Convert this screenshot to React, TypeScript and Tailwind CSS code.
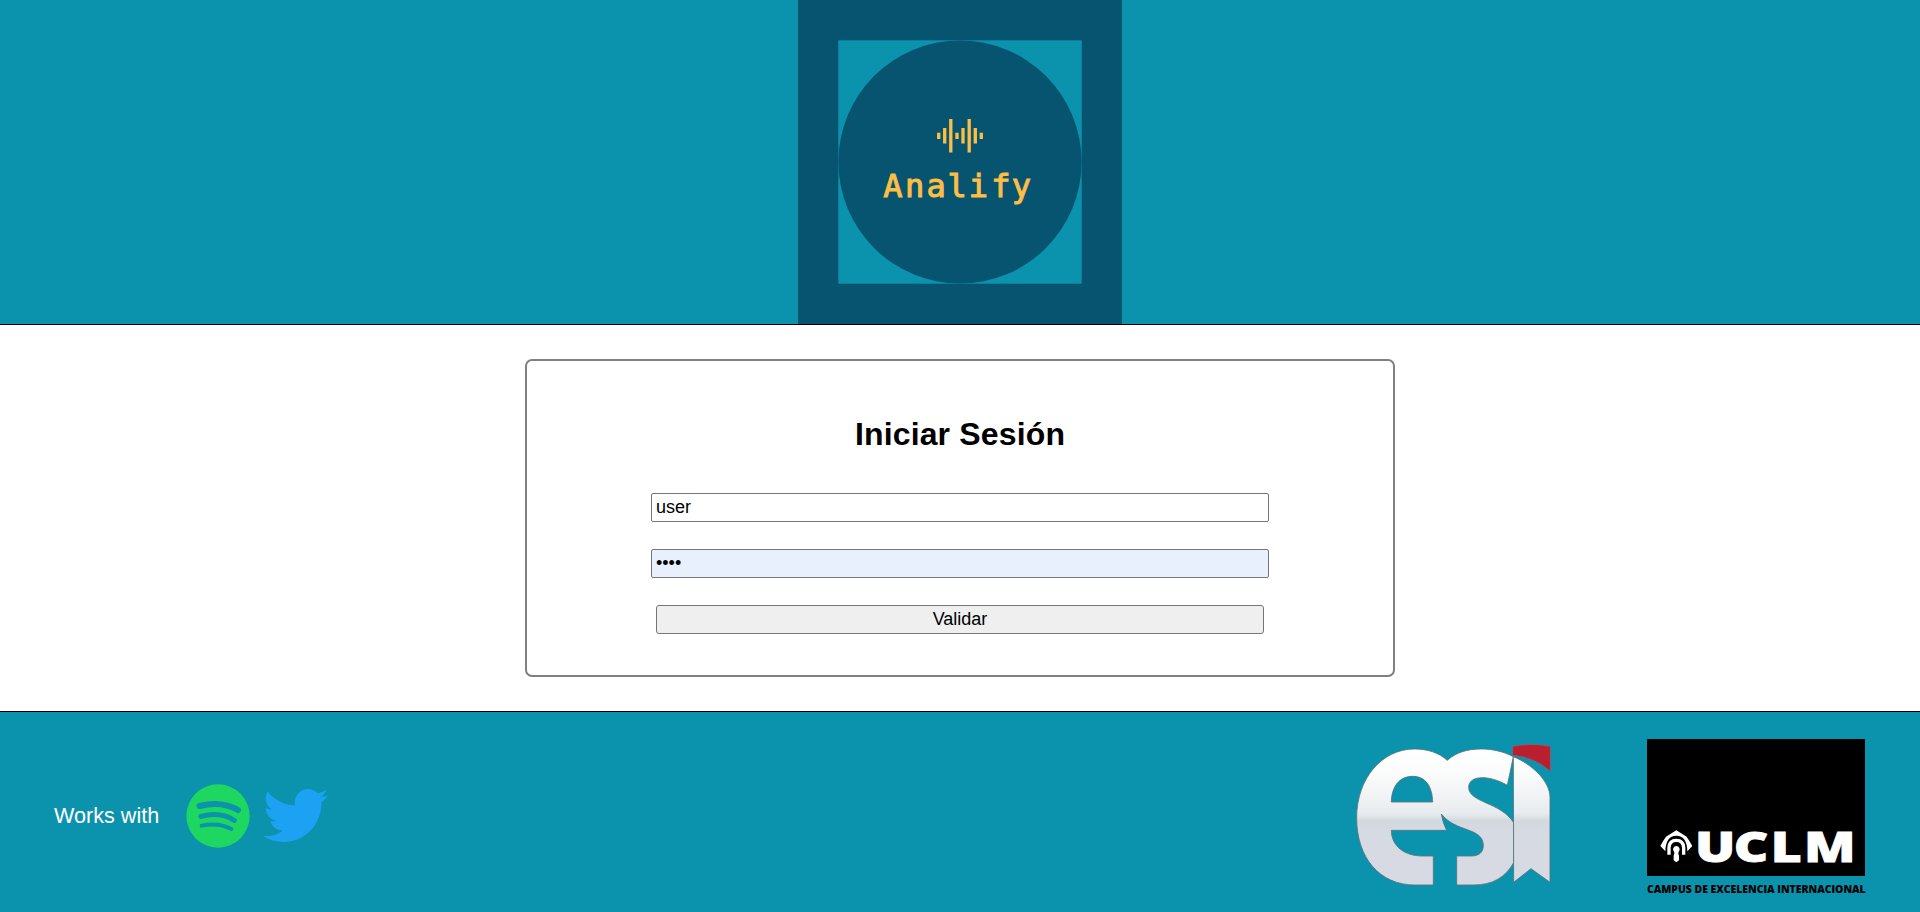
import React from "react";
import { FaTwitter } from "react-icons/fa";

function AnalifyLogo() {
  return (
    <svg width="324" height="324" viewBox="0 0 324 324" className="block shrink-0">
      <rect width="324" height="324" fill="#075470" />
      <rect x="40.3" y="40.3" width="243.4" height="243.4" fill="#0b92ad" />
      <circle cx="162" cy="162" r="121.6" fill="#075470" />
      <g stroke="#fdbe46" strokeWidth="3.3">
        <path d="M140.7 132.7v6.4M146.7 128v15.4M152.8 119v33.6M159 132.7v6.4M165 128v15.4M171.2 119v33.6M177.3 128v15.4M183.3 132.7v6.4" />
      </g>
      <text
        x="85.3 107 128.4 149.5 170.7 193.2 213.7"
        y="197.3"
        className="font-['DejaVu_Sans_Mono',monospace] text-[32px]"
        fill="#fdbe46"
        stroke="#fdbe46"
        strokeWidth="1"
      >
        Analify
      </text>
    </svg>
  );
}

function SpotifyLogo() {
  return (
    <svg width="64" height="64" viewBox="437 70 192 192" className="block shrink-0">
      <circle cx="533" cy="166" r="95" fill="#1ed760" />
      <g fill="none" stroke="#0b92ad" strokeLinecap="round">
        <path d="M478 136Q543 119 593 148" strokeWidth="18" />
        <path d="M482 167Q540 152 582 179" strokeWidth="15" />
        <path d="M484 195Q535 184 573 205" strokeWidth="12" />
      </g>
    </svg>
  );
}

function EsiLogo() {
  return (
    <svg width="200" height="146" viewBox="39 36 600 438" className="block shrink-0">
      <defs>
        <linearGradient id="steel" gradientUnits="userSpaceOnUse" x1="0" y1="56" x2="0" y2="466">
          <stop offset="0" stopColor="#ffffff" />
          <stop offset="0.2" stopColor="#fafbfb" />
          <stop offset="0.47" stopColor="#e8ecee" />
          <stop offset="0.53" stopColor="#d2d9de" />
          <stop offset="0.62" stopColor="#d6dae2" />
          <stop offset="1" stopColor="#d7dae2" />
        </linearGradient>
      </defs>
      <g stroke="#54747d" strokeWidth="2.5" strokeLinejoin="round">
        <path
          fill="url(#steel)"
          fillRule="evenodd"
          d="M322 91C297 68 262 57 224 57C125 57 50 146 50 264C50 383 119 465 224 465H280V378H247C193 378 154 348 154 301H320Q309 281 304 252C346 307 430 292 430 346C430 368 416 378 395 378H350V465H400C458 465 496 442 521 398V278C482 216 386 218 386 172C386 135 447 134 502 166L520 80C492 65 458 57 422 57C383 57 348 67 322 91ZM154 216C155 170 178 139 218 139C257 139 277 170 278 216Z"
        />
        <path fill="url(#steel)" d="M520 80C576 102 630 154 630 202V457L573 416L521 457Z" />
        <path fill="#ba1f2f" stroke="#876172" d="M518 49Q573 38 631 49V124Q583 81 518 76Z" />
      </g>
    </svg>
  );
}

function UclmLogo() {
  return (
    <svg width="220" height="156" viewBox="51 57 660 468" className="block shrink-0 overflow-visible">
      <rect x="51" y="57" width="654" height="411" fill="#000" />
      <path
        fill="#fff"
        d="M139 331Q158 343 170 350Q178 362 187 378L172 394Q171 348 139 347Q107 348 106 394L91 378Q99 362 108 350Q120 343 139 331Z"
      />
      <path d="M117 404V383Q118 361 139 361Q160 361 161 383V404" fill="none" stroke="#fff" strokeWidth="10" />
      <path d="M128 412V388Q128 374 139 374Q150 374 150 388V412" fill="none" stroke="#000" strokeWidth="3" />
      <path fill="#fff" d="M139 378a10 10 0 0 1 7 17q-3 5 1 12v14l-8 6l-8-6v-14q4-7 1-12a10 10 0 0 1 7-17Z" />
      <text
        transform="translate(0 425) scale(1.25 1)"
        x="156 249 338 417.5"
        y="0"
        className="font-['Open_Sans',sans-serif] text-[128px] font-extrabold"
        fill="#fff"
        stroke="#fff"
        strokeWidth="2.5"
      >
        UCLM
      </text>
      <text
        x="51"
        y="519"
        textLength="656"
        lengthAdjust="spacingAndGlyphs"
        className="font-['Open_Sans',sans-serif] text-[32px] font-extrabold"
        fill="#000"
      >
        CAMPUS DE EXCELENCIA INTERNACIONAL
      </text>
    </svg>
  );
}

export default function App() {
  return (
    <div className="flex h-[912px] w-full flex-col overflow-hidden bg-white font-['Liberation_Sans',Arial,sans-serif] text-black">
      <header className="flex h-[325px] shrink-0 justify-center border-b border-black bg-[#0b92ad]">
        <AnalifyLogo />
      </header>

      <main className="flex flex-1 items-center justify-center">
        <form
          className="flex h-[318px] w-[870px] flex-col items-center rounded-[7px] border-2 border-[#808080] pt-[55px]"
          onSubmit={(e) => e.preventDefault()}
        >
          <h1 className="text-[32px] leading-[37px] font-bold tracking-[0.15px]">Iniciar Sesión</h1>
          <input
            type="text"
            defaultValue="user"
            className="mt-[40px] h-[29px] w-[618px] rounded-[2px] border border-[#767676] px-[4px] text-lg leading-none outline-none"
          />
          <input
            type="password"
            defaultValue="user"
            className="mt-[27px] h-[29px] w-[618px] rounded-[2px] border border-[#767676] bg-[#e8f0fe] px-[4px] text-lg leading-none outline-none"
          />
          <button
            type="submit"
            className="mt-[27px] h-[29px] w-[608px] rounded-[3px] border border-[#767676] bg-[#efefef] pb-[2px] text-lg leading-none"
          >
            Validar
          </button>
        </form>
      </main>

      <footer className="flex h-[201px] shrink-0 items-center justify-between border-t border-black bg-[#0b92ad] pr-[53px] pl-[54px]">
        <div className="flex items-center pt-[7px]">
          <span className="w-[132px] pt-[2px] text-[21.6px] text-white">Works with</span>
          <SpotifyLogo />
          <FaTwitter className="ml-[12.5px] size-[65px] text-[#1da1f2]" />
        </div>
        <div className="flex items-start gap-[94px] pt-[10px]">
          <div className="pt-[3px]">
            <EsiLogo />
          </div>
          <UclmLogo />
        </div>
      </footer>
    </div>
  );
}
